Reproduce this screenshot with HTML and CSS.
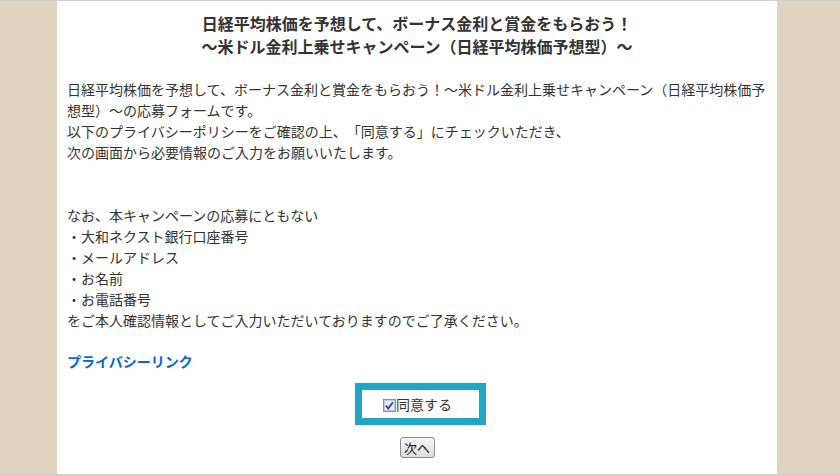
FILE: index.html
```html
<!DOCTYPE html>
<html lang="ja">
<head>
  <meta charset="UTF-8">
  <meta name="viewport" content="width=device-width, initial-scale=1.0">
  <title>応募フォーム</title>
  <link rel="stylesheet" href="styles.css">
</head>
<body>
  <div class="page">
    <div class="container">
      <h1 class="title">日経平均株価を予想して、ボーナス金利と賞金をもらおう！<br>～米ドル金利上乗せキャンペーン（日経平均株価予想型）～</h1>

      <p class="intro">
        日経平均株価を予想して、ボーナス金利と賞金をもらおう！～米ドル金利上乗せキャンペーン（日経平均株価予想型）～の応募フォームです。<br>
        以下のプライバシーポリシーをご確認の上、「同意する」にチェックいただき、<br>
        次の画面から必要情報のご入力をお願いいたします。<br>
        <br>
        <br>
        なお、本キャンペーンの応募にともない<br>
        ・大和ネクスト銀行口座番号<br>
        ・メールアドレス<br>
        ・お名前<br>
        ・お電話番号<br>
        をご本人確認情報としてご入力いただいておりますのでご了承ください。
      </p>

      <a class="privacy" href="#">プライバシーリンク</a>

      <div class="agree">
        <label class="agree-label">
          <span class="check">
            <svg width="13" height="13" viewBox="0 0 13 13">
              <rect x="0.5" y="0.5" width="12" height="12" fill="#dfe3ea" stroke="#8a8f99"/>
              <rect x="1.5" y="1.5" width="10" height="10" fill="#e9ecf2" stroke="#c4c9d3"/>
              <path d="M3 6.5 L5.2 9.5 L10 3.2" fill="none" stroke="#2b3f8c" stroke-width="1.8"/>
            </svg>
          </span>同意する
        </label>
      </div>

      <div class="actions">
        <button type="button" class="next">次へ</button>
      </div>
    </div>
  </div>
</body>
</html>
```

FILE: styles.css
```css
html, body {
  margin: 0;
  padding: 0;
}
body {
  font-family: "Noto Sans CJK JP", "Noto Sans", sans-serif;
  color: #333;
  background-color: #e1d5c2;
  text-spacing-trim: space-all;
}
.page {
  height: 475px;
  box-sizing: border-box;
  border-top: 1px solid #cfcfcf;
  border-bottom: 1px solid #cfcfcf;
  overflow: hidden;
}
.container {
  width: 720px;
  height: 100%;
  margin-left: 57px;
  padding: 11px 10px 0;
  box-sizing: border-box;
  background-color: #fff;
}
.title {
  margin: 0;
  font-size: 16px;
  line-height: 23px;
  text-align: center;
  color: #333;
}
.intro {
  margin: 21px 0 0;
  font-size: 14px;
  line-height: 21px;
}
.privacy {
  display: block;
  margin-top: 20px;
  font-size: 14px;
  line-height: 21px;
  font-weight: bold;
  color: #0a67cf;
  text-decoration: none;
}
.agree {
  width: 131px;
  height: 42px;
  box-sizing: border-box;
  margin: 11px 0 0 288px;
  border: 7px solid #21a5c4;
  display: flex;
  align-items: center;
  padding-left: 21px;
}
.agree-label {
  display: flex;
  align-items: center;
  font-size: 14px;
  line-height: 21px;
  color: #333;
}
.check {
  display: flex;
  width: 13px;
  height: 13px;
  margin-top: 2px;
}
.actions {
  margin-top: 12px;
  display: flex;
  justify-content: center;
}
.next {
  width: 35px;
  height: 21px;
  padding: 0;
  font-family: "Noto Sans CJK JP", sans-serif;
  font-size: 13px;
  line-height: 17px;
  color: #111;
  border: 1px solid #8d8d8d;
  border-radius: 3px;
  background: linear-gradient(#f6f6f6, #dedede);
}
```
